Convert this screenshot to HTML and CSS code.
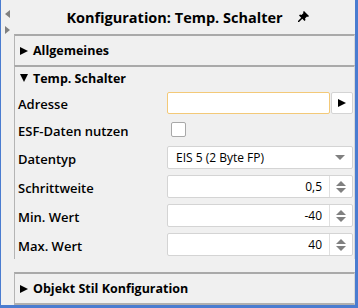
FILE: index.html
```html
<html>
<head>
    <link rel="stylesheet" href="styles.css">
</head>
<body>
<div id="frame">
    <div id="strip">
        <div class="arrow-left"></div>
        <div class="arrow-right"></div>
    </div>
    <div id="panel">
        <div id="title">
            <span>Konfiguration: Temp. Schalter</span>
            <svg class="pin" width="11" height="11" viewBox="0 0 11 11">
                <path d="M6 0 L11 5 L10 6 L9 5.5 L7 7.5 L7.5 9 L6.5 10 L4.3 7.8 L1 11 L0 11 L0 10 L3.2 6.7 L1 4.5 L2 3.5 L3.5 4 L5.5 2 L5 1 Z" fill="#000"/>
            </svg>
        </div>
        <div class="section closed">
            <div class="header"><span class="tri-right"></span>Allgemeines</div>
        </div>
        <div class="section open">
            <div class="header"><span class="tri-down"></span>Temp. Schalter</div>
            <div class="row short">
                <div class="label">Adresse</div>
                <div class="field">
                    <div class="input focus"></div>
                    <div class="button"><span class="tri-right small"></span></div>
                </div>
            </div>
            <div class="row short">
                <div class="label">ESF-Daten nutzen</div>
                <div class="field">
                    <div class="check"></div>
                </div>
            </div>
            <div class="row">
                <div class="label">Datentyp</div>
                <div class="field">
                    <div class="input select">EIS 5 (2 Byte FP)<span class="drop"></span></div>
                </div>
            </div>
            <div class="row">
                <div class="label">Schrittweite</div>
                <div class="field">
                    <div class="input spin"><span class="value">0,5</span><span class="spinner"><i class="up"></i><i class="down"></i></span></div>
                </div>
            </div>
            <div class="row">
                <div class="label">Min. Wert</div>
                <div class="field">
                    <div class="input spin"><span class="value">-40</span><span class="spinner"><i class="up"></i><i class="down"></i></span></div>
                </div>
            </div>
            <div class="row">
                <div class="label">Max. Wert</div>
                <div class="field">
                    <div class="input spin"><span class="value">40</span><span class="spinner"><i class="up"></i><i class="down"></i></span></div>
                </div>
            </div>
        </div>
        <div class="section last">
            <div class="header"><span class="tri-right"></span>Objekt Stil Konfiguration</div>
        </div>
    </div>
</div>
</body>
</html>
```

FILE: styles.css
```css
body {
    margin: 0;
    background: #f0f0f0;
    font-family: "Open Sans", sans-serif;
    font-size: 12px;
    color: #000;
}
#frame {
    display: flex;
    height: 305px;
    width: 354px;
    border-left: 1px solid #4a7cd0;
    border-right: 3px solid #4a7cd0;
    border-bottom: 3px solid #4a7cd0;
    background: #f0f0f0;
}
#strip {
    width: 13px;
    display: flex;
    flex-direction: column;
    align-items: center;
    padding-top: 10px;
    gap: 8px;
}
.arrow-left {
    width: 0;
    height: 0;
    border-top: 4.5px solid transparent;
    border-bottom: 4.5px solid transparent;
    border-right: 5px solid #808080;
}
.arrow-right {
    width: 0;
    height: 0;
    border-top: 4.5px solid transparent;
    border-bottom: 4.5px solid transparent;
    border-left: 5px solid #808080;
}
#panel {
    flex: 1;
    display: flex;
    flex-direction: column;
}
#title {
    height: 38px;
    display: flex;
    align-items: center;
    justify-content: center;
    gap: 15px;
    font-size: 14.5px;
    font-weight: 700;
    padding-left: 6px;
}
.pin {
    margin-top: -2px;
}
.section {
    border-top: 2px solid #a9a9a9;
    border-left: 1px solid #b4b4b4;
    border-right: 1px solid #d8d8d8;
}
.section.last {
    border-bottom: 2px solid #b0b0b0;
    margin-top: 13px;
}
.header {
    display: flex;
    align-items: center;
    font-weight: 700;
    font-size: 12.5px;
    padding-left: 5px;
}
.closed .header {
    height: 29px;
}
.open .header {
    height: 22px;
}
.last .header {
    height: 29px;
}
.tri-right {
    width: 0;
    height: 0;
    border-top: 4px solid transparent;
    border-bottom: 4px solid transparent;
    border-left: 8px solid #000;
    margin-right: 5px;
}
.tri-right.small {
    margin: 0;
}
.tri-down {
    width: 0;
    height: 0;
    border-left: 4px solid transparent;
    border-right: 4px solid transparent;
    border-top: 8px solid #000;
    margin-right: 5px;
}
.row {
    display: flex;
    align-items: center;
    height: 29px;
}
.row.short {
    height: 27px;
}
.label {
    width: 149px;
    padding-left: 3px;
    font-weight: 600;
    font-size: 13px;
    padding-top: 2px;
}
.field {
    flex: 1;
    display: flex;
    align-items: center;
    padding-right: 1px;
}
.input {
    flex: 1;
    height: 21px;
    background: #fff;
    border: 1px solid #d4d4d4;
    border-radius: 2px;
    display: flex;
    align-items: center;
}
.input.focus {
    border-color: #f3c978;
    height: 20px;
}
.button {
    width: 22px;
    height: 22px;
    margin-left: 1px;
    background: #fff;
    border: 1px solid #d4d4d4;
    border-radius: 2px;
    display: flex;
    align-items: center;
    justify-content: center;
    box-sizing: border-box;
}
.check {
    width: 13px;
    height: 13px;
    margin-left: 4px;
    background: #fff;
    border: 1px solid #a8a8a8;
    border-radius: 2px;
}
.select {
    padding-left: 8px;
    position: relative;
}
.drop {
    position: absolute;
    right: 7px;
    top: 8px;
    width: 0;
    height: 0;
    border-left: 5px solid transparent;
    border-right: 5px solid transparent;
    border-top: 5px solid #808080;
}
.spin .value {
    flex: 1;
    text-align: right;
    padding-right: 7px;
}
.spinner {
    width: 22px;
    height: 100%;
    border-left: 1px solid #e0e0e0;
    display: flex;
    flex-direction: column;
    align-items: center;
    justify-content: center;
    gap: 2px;
}
.spinner .up {
    width: 0;
    height: 0;
    border-left: 5px solid transparent;
    border-right: 5px solid transparent;
    border-bottom: 5px solid #808080;
}
.spinner .down {
    width: 0;
    height: 0;
    border-left: 5px solid transparent;
    border-right: 5px solid transparent;
    border-top: 5px solid #808080;
}
```
